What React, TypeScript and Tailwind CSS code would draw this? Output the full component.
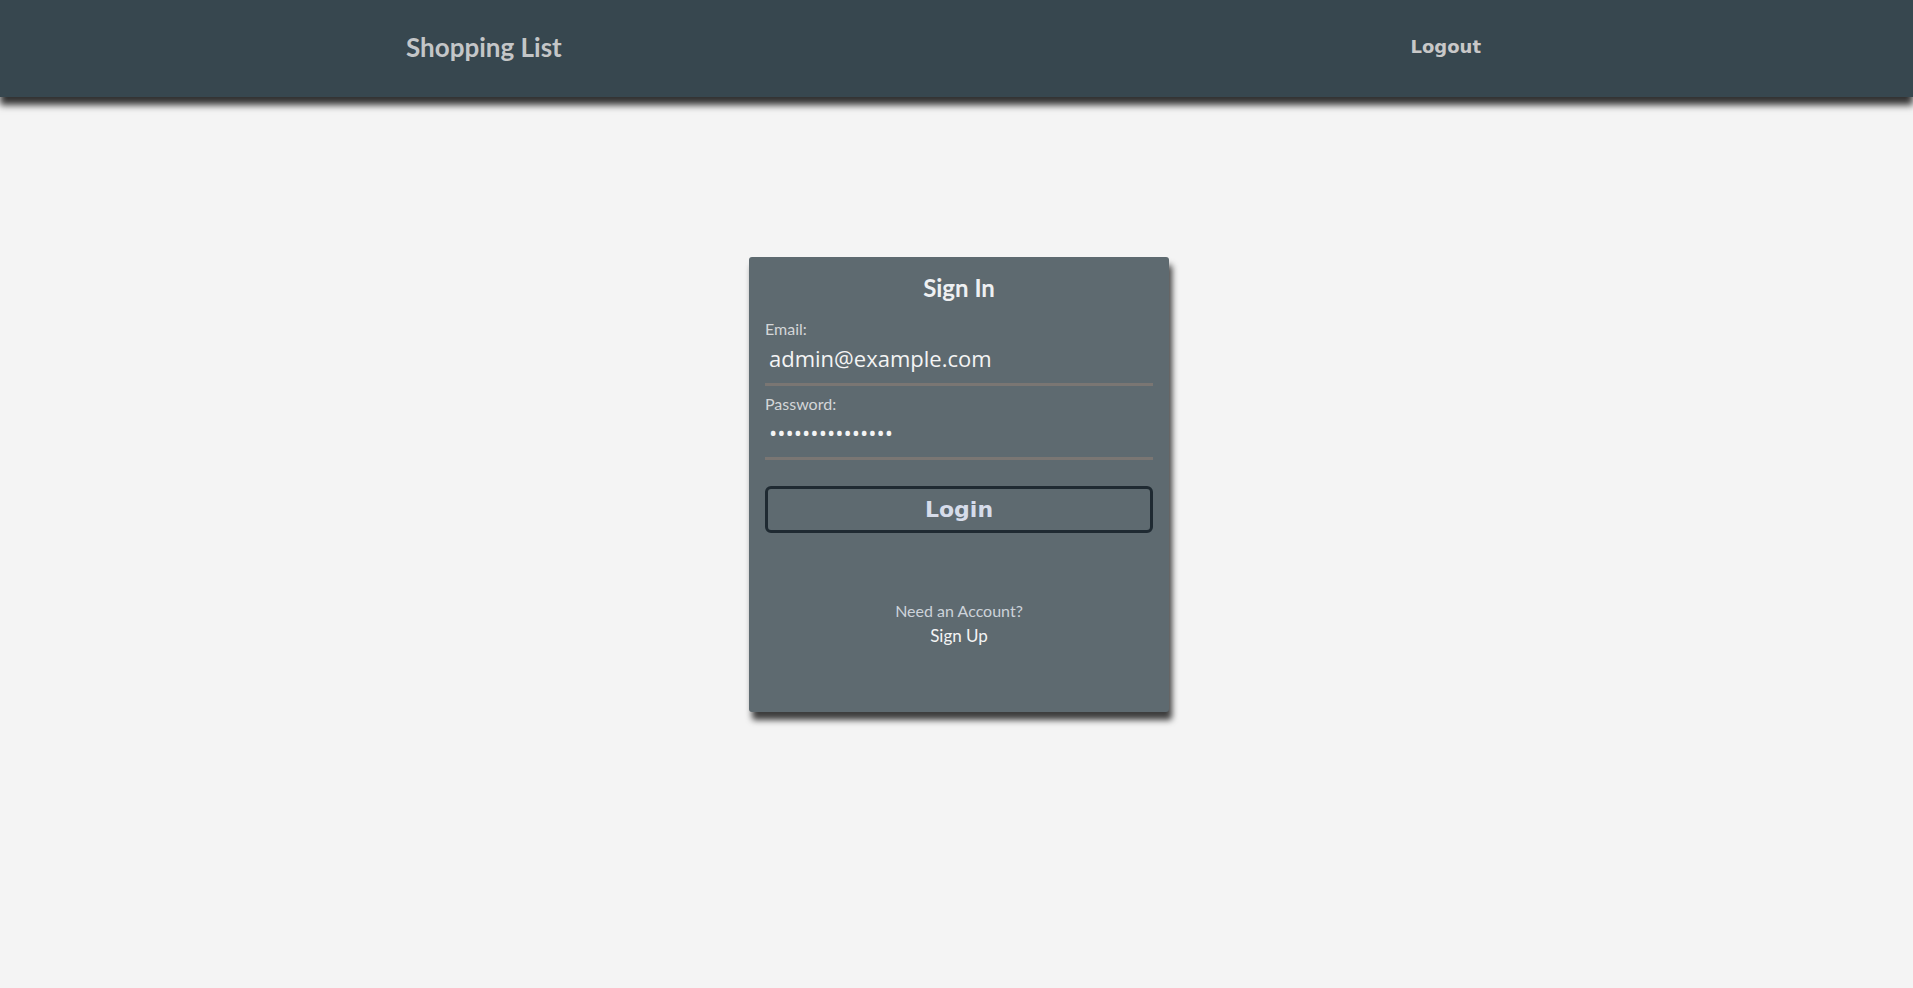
import React from "react";

export default function App() {
  return (
    <div className="min-h-screen bg-[#f4f4f4] font-['Lato',sans-serif]">
      <header className="h-[97px] bg-[#37474f] shadow-[0_8px_7px_rgba(0,0,0,0.8)]">
        <div className="mx-auto flex h-full w-[1101px] items-center justify-between">
          <a href="#" className="text-[26px] font-bold leading-none text-[#c4c6c8] -mt-[3px]">
            Shopping List
          </a>
          <a
            href="#"
            className="mr-[26px] font-['DejaVu_Sans',sans-serif] text-[18px] font-bold text-[#c8c8c8] -mt-[5px]"
          >
            Logout
          </a>
        </div>
      </header>

      <main className="flex justify-center pt-[160px] pl-[5px]">
        <form className="flex w-[420px] flex-col rounded-[3px] bg-[#5e6a70] px-4 pt-[16px] pb-[66px] shadow-[3px_8px_6px_rgba(0,0,0,0.75)]">
          <h2 className="text-center text-[24px] font-bold leading-[30px] text-[#eef0f2]">Sign In</h2>

          <label className="mt-[17px] text-[16px] leading-[18px] text-[#d4d6d8]">Email:</label>
          <input
            type="email"
            defaultValue="admin@example.com"
            className="border-b-[3px] border-[#7a7673] bg-transparent px-1 pt-[5px] pb-[10px] font-['Open_Sans',sans-serif] text-[22px] leading-[30px] text-[#f4f4f4] outline-none"
          />

          <label className="mt-[9px] text-[16px] leading-[18px] text-[#d4d6d8]">Password:</label>
          <input
            type="password"
            defaultValue="secretpassword1"
            className="border-b-[3px] border-[#7a7673] bg-transparent px-1 pt-[4px] pb-[10px] font-['Open_Sans',sans-serif] text-[22px] leading-[30px] text-[#f4f4f4] outline-none"
          />

          <button
            type="button"
            className="mt-[26px] h-[47px] rounded-[6px] border-[3px] border-[#1f2a32] font-['DejaVu_Sans',sans-serif] text-[22px] font-bold text-[#d6dcea]"
          >
            Login
          </button>

          <div className="mt-[69px] flex flex-col items-center">
            <span className="text-[16px] leading-[18px] text-[#cdd3da]">Need an Account?</span>
            <a href="#" className="mt-[6px] text-[17px] leading-[1.2] text-[#f4f4f4]">
              Sign Up
            </a>
          </div>
        </form>
      </main>
    </div>
  );
}
